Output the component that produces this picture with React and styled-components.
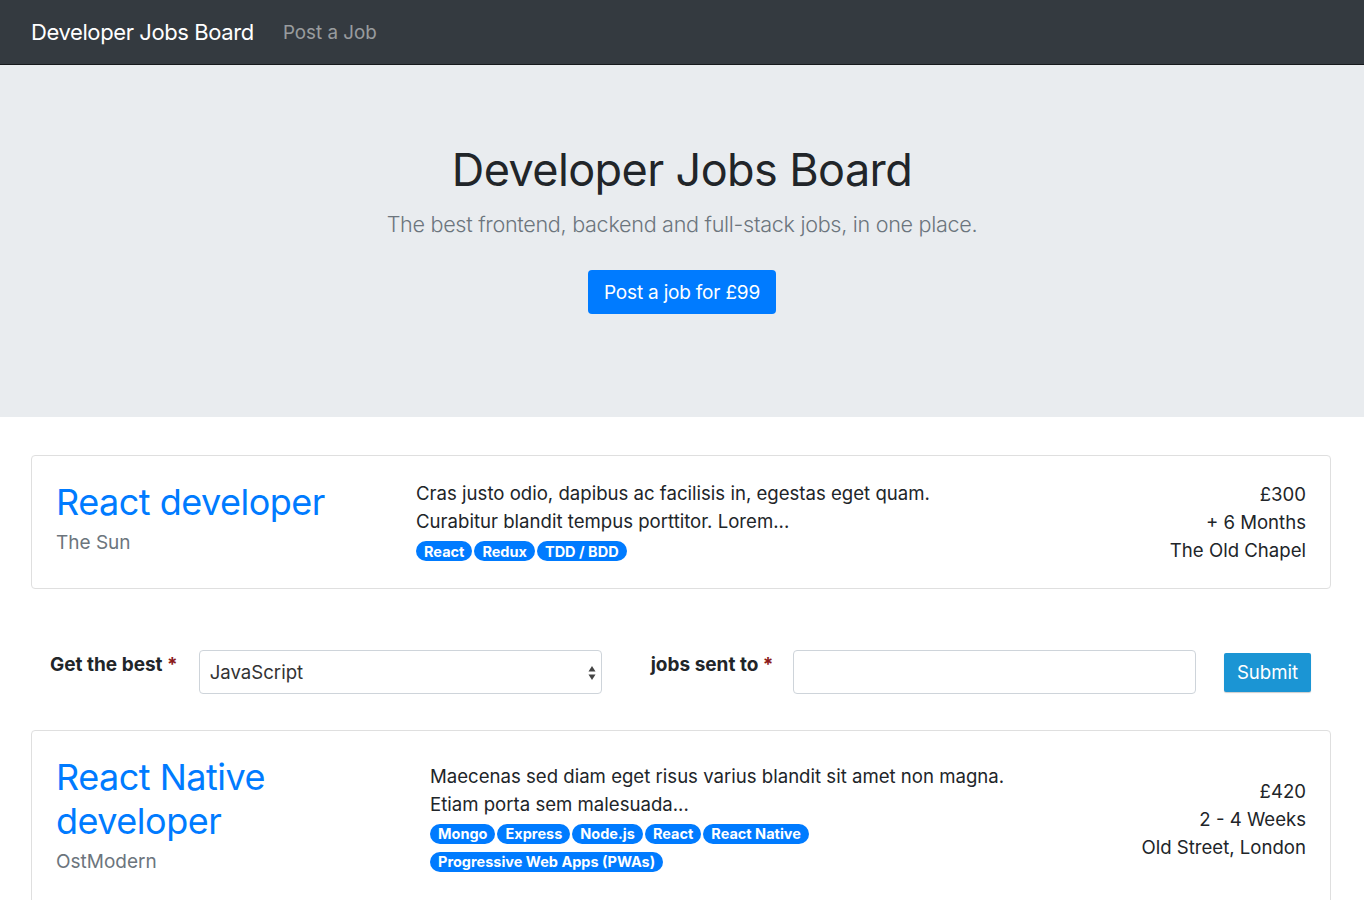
import React from 'react';
import styled, { createGlobalStyle } from 'styled-components';

const GlobalStyle = createGlobalStyle`
  body {
    margin: 0;
    background: #fff;
    font-family: Inter, "Liberation Sans", sans-serif;
    color: #212529;
  }
`;

const Navbar = styled.nav`
  display: flex;
  align-items: center;
  height: 64px;
  padding: 0 31px;
  background: #343a40;
  border-bottom: 1px solid #16191c;
`;

const Brand = styled.a`
  font-size: 22px;
  letter-spacing: -0.4px;
  color: #fff;
  margin-right: 29px;
`;

const NavLink = styled.a`
  font-size: 18.8px;
  color: rgba(255, 255, 255, 0.5);
`;

const Jumbotron = styled.header`
  display: flex;
  flex-direction: column;
  align-items: center;
  padding: 77px 32px 103px;
  background: #e9ecef;
`;

const Heading = styled.h1`
  margin: 0;
  font-size: 45px;
  font-weight: 400;
  line-height: 56px;
  letter-spacing: -0.6px;
`;

const Lead = styled.p`
  margin: 11px 0 31px;
  font-size: 21.6px;
  font-weight: 300;
  line-height: 30px;
  letter-spacing: -0.3px;
  color: #6c757d;
`;

const PrimaryButton = styled.button`
  height: 44px;
  padding: 0 16px;
  border: none;
  border-radius: 4px;
  background: #007bff;
  color: #fff;
  font-family: inherit;
  font-size: 19px;
  letter-spacing: -0.2px;
`;

const Main = styled.main`
  padding: 38px 33px 0 31px;
`;

const Card = styled.article`
  display: flex;
  align-items: center;
  padding: 23px 24px;
  border: 1px solid #dfdfdf;
  border-radius: 4px;
`;

const TitleCol = styled.div`
  align-self: flex-start;
  flex: 0 0 ${({ $width }) => $width}px;
  padding-top: 1px;
`;

const JobTitle = styled.h2`
  margin: 0;
  max-width: 300px;
  font-size: 36px;
  font-weight: 400;
  line-height: 44px;
  letter-spacing: -0.5px;
  color: #007bff;
`;

const Company = styled.div`
  margin: 5px 0 7px;
  font-size: 19px;
  line-height: 28px;
  color: #6c757d;
`;

const MiddleCol = styled.div`
  flex: 0 1 590px;
`;

const Line = styled.div`
  font-size: 18.6px;
  line-height: 28px;
  white-space: nowrap;
`;

const Tags = styled.div`
  display: flex;
  flex-wrap: wrap;
  gap: 0 2px;
  margin-top: 2px;
`;

const Tag = styled.span`
  display: inline-flex;
  align-items: center;
  height: 20px;
  margin: 4px 0;
  padding: 0 8px;
  border-radius: 10px;
  background: #007bff;
  color: #fff;
  font-size: 14.5px;
  font-weight: 700;
`;

const RightCol = styled.div`
  margin-left: auto;
  text-align: right;
  font-size: 18.6px;
  line-height: 28px;
`;

const Form = styled.form`
  display: flex;
  align-items: center;
  margin: 61px 0 36px;
  padding: 0 20px 0 19px;
`;

const Label = styled.label`
  align-self: flex-start;
  margin: 3px ${({ $gap }) => $gap}px 0 0;
  font-size: 19px;
  font-weight: 700;
  line-height: 24px;
  white-space: nowrap;
`;

const Required = styled.span`
  color: #8b1a1a;
`;

const SelectBox = styled.div`
  position: relative;
  display: flex;
  align-items: center;
  width: 403px;
  height: 44px;
  margin-right: 49px;
  padding: 0 10px;
  box-sizing: border-box;
  border: 1px solid #ced4da;
  border-radius: 4px;
  font-size: 18.6px;
  color: #333;
`;

const Arrows = styled.svg`
  position: absolute;
  right: 5px;
  top: 14px;
`;

const TextInput = styled.input`
  width: 403px;
  height: 44px;
  margin-right: 26px;
  box-sizing: border-box;
  border: 1px solid #ced4da;
  border-radius: 4px;
`;

const SubmitButton = styled.button`
  margin-left: auto;
  height: 39px;
  width: 87px;
  border: none;
  border-radius: 2px;
  background: #1b95d4;
  color: #fff;
  font-family: inherit;
  font-size: 18.6px;
  box-shadow: 0 1px 1px rgba(0, 0, 0, 0.2);
`;

const jobs = [
  {
    title: 'React developer',
    company: 'The Sun',
    width: 360,
    lines: ['Cras justo odio, dapibus ac facilisis in, egestas eget quam.', 'Curabitur blandit tempus porttitor. Lorem...'],
    tags: ['React', 'Redux', 'TDD / BDD'],
    meta: ['£300', '+ 6 Months', 'The Old Chapel'],
  },
  {
    title: 'React Native developer',
    company: 'OstModern',
    width: 374,
    lines: ['Maecenas sed diam eget risus varius blandit sit amet non magna.', 'Etiam porta sem malesuada...'],
    tags: ['Mongo', 'Express', 'Node.js', 'React', 'React Native', 'Progressive Web Apps (PWAs)'],
    meta: ['£420', '2 - 4 Weeks', 'Old Street, London'],
  },
];

function JobCard({ job }) {
  return (
    <Card>
      <TitleCol $width={job.width}>
        <JobTitle>{job.title}</JobTitle>
        <Company>{job.company}</Company>
      </TitleCol>
      <MiddleCol>
        {job.lines.map((l) => (
          <Line key={l}>{l}</Line>
        ))}
        <Tags>
          {job.tags.map((t) => (
            <Tag key={t}>{t}</Tag>
          ))}
        </Tags>
      </MiddleCol>
      <RightCol>
        {job.meta.map((m) => (
          <div key={m}>{m}</div>
        ))}
      </RightCol>
    </Card>
  );
}

export default function App() {
  return (
    <>
      <GlobalStyle />
      <Navbar>
        <Brand>Developer Jobs Board</Brand>
        <NavLink>Post a Job</NavLink>
      </Navbar>
      <Jumbotron>
        <Heading>Developer Jobs Board</Heading>
        <Lead>The best frontend, backend and full-stack jobs, in one place.</Lead>
        <PrimaryButton>Post a job for £99</PrimaryButton>
      </Jumbotron>
      <Main>
        <JobCard job={jobs[0]} />
        <Form onSubmit={(e) => e.preventDefault()}>
          <Label $gap={21}>
            Get the best <Required>*</Required>
          </Label>
          <SelectBox>
            JavaScript
            <Arrows width="8" height="16" viewBox="0 0 8 16">
              <path d="M4 1 L7.5 6.5 H0.5 Z" fill="#444" />
              <path d="M4 15 L7.5 9.5 H0.5 Z" fill="#444" />
            </Arrows>
          </SelectBox>
          <Label $gap={20}>
            jobs sent to <Required>*</Required>
          </Label>
          <TextInput />
          <SubmitButton type="submit">Submit</SubmitButton>
        </Form>
        <JobCard job={jobs[1]} />
      </Main>
    </>
  );
}
